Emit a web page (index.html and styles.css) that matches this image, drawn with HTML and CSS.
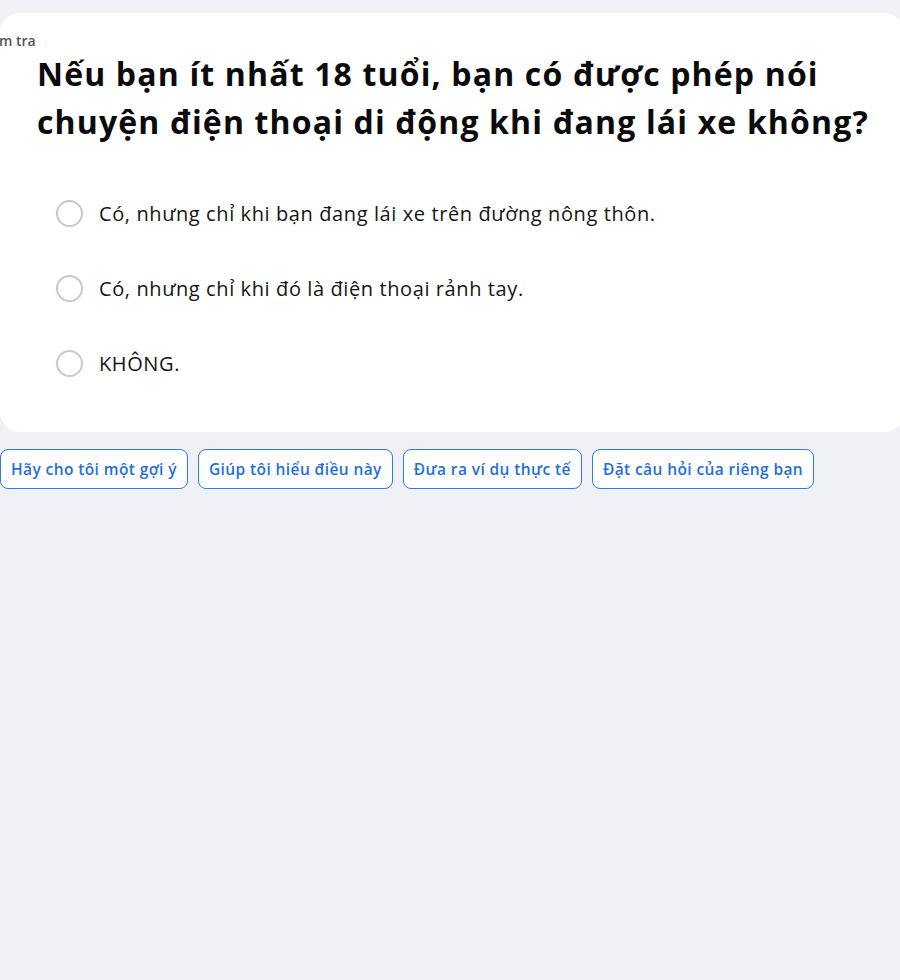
FILE: index.html
```html
<!DOCTYPE html>
<html lang="vi">
<head>
<meta charset="utf-8">
<link rel="stylesheet" href="styles.css">
</head>
<body>
<div class="page">
  <section class="card">
    <div class="label">Kiểm tra</div>
    <h1 class="question">Nếu bạn ít nhất 18 tuổi, bạn có được phép nói chuyện điện thoại di động khi đang lái xe không?</h1>
    <ul class="options">
      <li class="option"><span class="radio"></span><span class="opt-text">Có, nhưng chỉ khi bạn đang lái xe trên đường nông thôn.</span></li>
      <li class="option"><span class="radio"></span><span class="opt-text">Có, nhưng chỉ khi đó là điện thoại rảnh tay.</span></li>
      <li class="option"><span class="radio"></span><span class="opt-text">KHÔNG.</span></li>
    </ul>
  </section>
  <div class="actions">
    <button class="chip">Hãy cho tôi một gợi ý</button>
    <button class="chip">Giúp tôi hiểu điều này</button>
    <button class="chip">Đưa ra ví dụ thực tế</button>
    <button class="chip">Đặt câu hỏi của riêng bạn</button>
  </div>
</div>
</body>
</html>
```
FILE: styles.css
```css
html, body {
  margin: 0;
  padding: 0;
  background: #f0f1f6;
  font-family: "Open Sans", "Noto Sans", sans-serif;
  color: #111;
  overflow: hidden;
}
.page {
  padding-top: 13px;
  width: 900px;
}
.card {
  background: #fff;
  border-radius: 20px;
  margin-right: -4px;
  padding: 19px 0 55px 0;
}
.label {
  margin-left: -22px;
  font-size: 14px;
  font-weight: 600;
  color: #555;
  line-height: 18px;
}
.question {
  margin: 0 0 0 37px;
  font-size: 32px;
  font-weight: 700;
  line-height: 48px;
  color: #0b0b0b;
  letter-spacing: 1.15px;
}
.options {
  list-style: none;
  margin: 54px 0 0 0;
  padding: 0 0 0 56px;
  display: flex;
  flex-direction: column;
  gap: 48px;
}
.option {
  display: flex;
  align-items: center;
  gap: 16px;
  height: 27px;
}
.radio {
  width: 23px;
  height: 23px;
  border: 2px solid #c6c6d4;
  border-radius: 50%;
  flex: none;
}
.opt-text {
  font-size: 20px;
  letter-spacing: 0.6px;
  color: #151515;
}
.actions {
  display: flex;
  gap: 10px;
  margin-top: 17px;
}
.chip {
  height: 40px;
  padding: 0 10px;
  background: #fff;
  border: 1px solid #2b7de0;
  border-radius: 8px;
  color: #1f6fdc;
  font-family: "Open Sans", "Noto Sans", sans-serif;
  font-size: 15.5px;
  font-weight: 600;
  letter-spacing: 0.4px;
}
```
